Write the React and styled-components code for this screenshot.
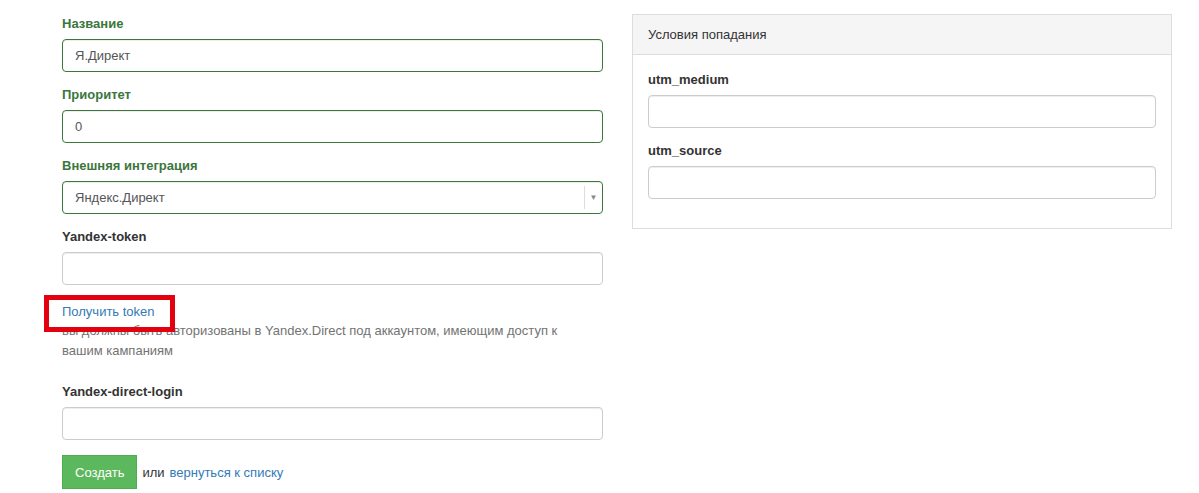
import React from "react";
import styled, { createGlobalStyle } from "styled-components";

const G = createGlobalStyle`
  body { margin:0; background:#fff; font-family:"Liberation Sans", Arial, sans-serif; font-size:13px; color:#333; }
`;
const Page = styled.div`display:flex; gap:29px; padding:15px 0 0 62px; align-items:flex-start;`;
const Left = styled.div`width:541px; display:flex; flex-direction:column;`;
const Group = styled.div`display:flex; flex-direction:column; margin-bottom:${p => p.mb ?? 14}px;`;
const Label = styled.div`font-weight:bold; font-size:13px; line-height:18px; margin:0 0 6px; color:${p => p.ok ? "#3c763d" : "#333"};`;
const Input = styled.div`
  height:33px; box-sizing:border-box; border:1px solid ${p => p.ok ? "#3c763d" : "#ccc"}; border-radius:4px;
  padding:0 12px; display:flex; align-items:center; font-size:13px; color:#555; position:relative;
  box-shadow: inset 0 1px 1px rgba(0,0,0,.075);
`;
const Arrow = styled.div`position:absolute; right:0; top:4px; bottom:4px; width:17px; border-left:1px solid #ddd;
  display:flex; align-items:center; justify-content:center; font-size:8px; color:#888;`;
const Help = styled.div`position:relative; margin-top:-2px; margin-bottom:22px;`;
const Link = styled.a`color:#337ab7; text-decoration:none; font-size:13px;`;
const HelpText = styled.div`color:#737373; font-size:13px; line-height:20px; margin-top:2px; width:520px;`;
const Mark = styled.div`position:absolute; left:-18px; top:-9px; width:121px; height:27px; border:5px solid #e3000f;`;
const Actions = styled.div`display:flex; align-items:center; gap:5px; margin-top:0;`;
const Btn = styled.button`background:#5cb85c; border:1px solid #4cae4c; color:#fff; height:34px; padding:0 12px; font:13px "Liberation Sans", Arial, sans-serif; border-radius:0;`;
const Panel = styled.div`width:540px; box-sizing:border-box; border:1px solid #ddd; margin-top:-1px;`;
const PanelHead = styled.div`background:#f5f5f5; border-bottom:1px solid #ddd; height:39px; padding:0 15px; display:flex; align-items:center; font-size:13px; color:#333;`;
const PanelBody = styled.div`padding:16px 15px 15px;`;

export default function App() {
  return (<>
    <G />
    <Page>
      <Left>
        <Group><Label ok>Название</Label><Input ok>Я.Директ</Input></Group>
        <Group><Label ok>Приоритет</Label><Input ok>0</Input></Group>
        <Group><Label ok>Внешняя интеграция</Label><Input ok>Яндекс.Директ<Arrow>▼</Arrow></Input></Group>
        <Group mb={21}><Label>Yandex-token</Label><Input /></Group>
        <Help>
          <Link href="#">Получить token</Link>
          <HelpText>вы должны быть авторизованы в Yandex.Direct под аккаунтом, имеющим доступ к вашим кампаниям</HelpText>
          <Mark />
        </Help>
        <Group mb={15}><Label>Yandex-direct-login</Label><Input /></Group>
        <Actions><Btn>Создать</Btn>или <Link href="#">вернуться к списку</Link></Actions>
      </Left>
      <Panel>
        <PanelHead>Условия попадания</PanelHead>
        <PanelBody>
          <Group><Label>utm_medium</Label><Input /></Group>
          <Group><Label>utm_source</Label><Input /></Group>
        </PanelBody>
      </Panel>
    </Page>
  </>);
}
